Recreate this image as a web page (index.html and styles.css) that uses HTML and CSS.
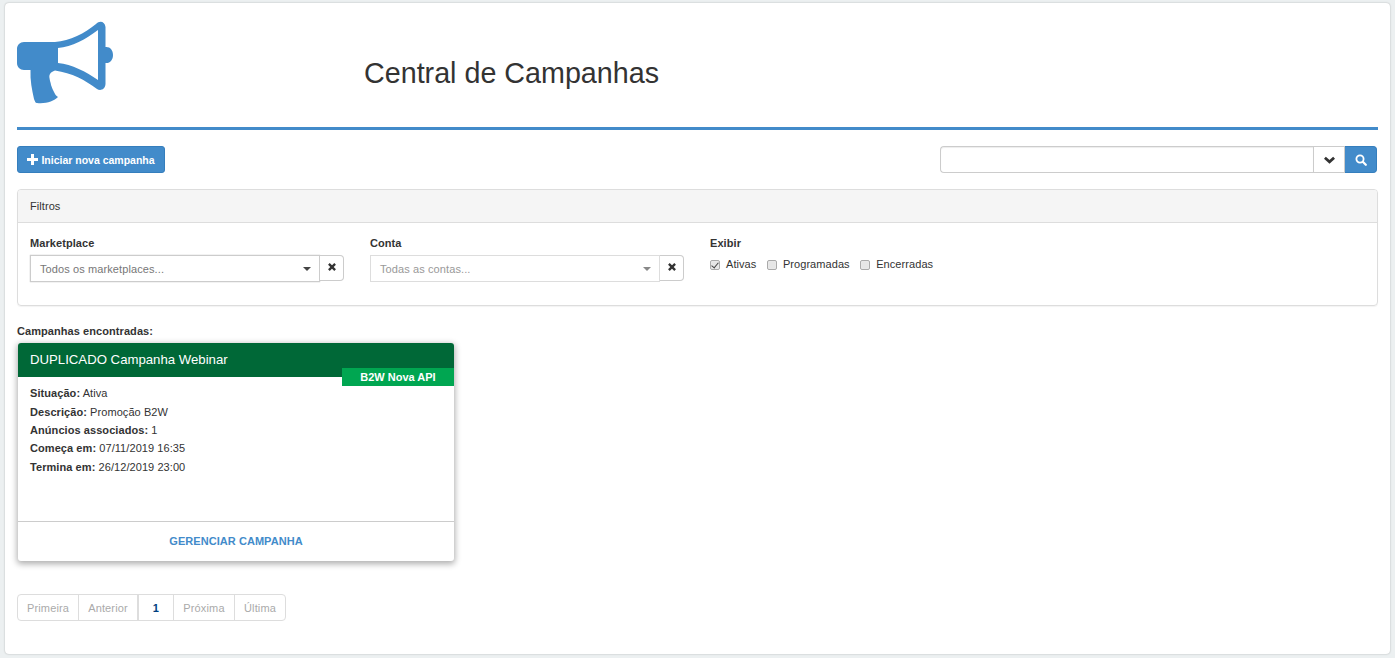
FILE: index.html
```html
<!DOCTYPE html>
<html lang="pt">
<head>
<meta charset="utf-8">
<title>Central de Campanhas</title>
<link rel="stylesheet" href="styles.css">
</head>
<body>
<main class="page">
  <header class="head">
    <svg class="logo" viewBox="17 20 96 84" aria-hidden="true">
      <path fill="#428bca" d="M24 42H55C70 41 85 33 96 24C100 20 105 22 105.5 27V47C110 46.5 113 50 113 55C113 60 110 63.5 105.5 63V84C105 90 100 91 97 89C85 80 72 73 55 70.5C50 72 49 75 49.5 78C50 82 51 83 51 85C52 88 53 90 54 92C55 94 56 96 58 97C54 101 46 104 37 103C35 103 35 101 34 99C32 90 30 80 30.5 70H24C20 70 17 67 17 63V49C17 45 20 42 24 42Z"/>
      <path fill="#fff" d="M58 48V63C72 64 86 72 98 80V30C86 39 72 47 58 48Z"/>
    </svg>
    <h1 class="title">Central de Campanhas</h1>
  </header>

  <div class="toolbar">
    <button class="btn-new" type="button">
      <svg class="plus" viewBox="0 0 11 11" aria-hidden="true"><path fill="#fff" d="M4 0H7V4H11V7H7V11H4V7H0V4H4Z"/></svg>
      Iniciar nova campanha
    </button>
    <div class="search">
      <input class="search-input" type="text" aria-label="Buscar">
      <button class="search-drop" type="button" aria-label="Opções">
        <svg viewBox="0 0 12 8" width="11" height="8" aria-hidden="true"><path fill="none" stroke="#333" stroke-width="3" d="M1 1.5L6 6L11 1.5"/></svg>
      </button>
      <button class="search-go" type="button" aria-label="Buscar">
        <svg viewBox="0 0 12 12" width="12" height="12" aria-hidden="true"><circle cx="5" cy="5" r="3.6" fill="none" stroke="#fff" stroke-width="1.8"/><path stroke="#fff" stroke-width="2.2" stroke-linecap="round" d="M8 8L10.8 10.8"/></svg>
      </button>
    </div>
  </div>

  <section class="panel">
    <div class="panel-head">Filtros</div>
    <div class="panel-body">
      <div class="field">
        <label class="field-label">Marketplace</label>
        <div class="combo">
          <div class="select select-strong"><span>Todos os marketplaces...</span><i class="caret"></i></div>
          <button class="clear" type="button" aria-label="Limpar">
            <svg viewBox="0 0 9 9" width="8" height="8" aria-hidden="true"><path stroke="#333" stroke-width="2.6" d="M1 1L8 8M8 1L1 8"/></svg>
          </button>
        </div>
      </div>
      <div class="field">
        <label class="field-label">Conta</label>
        <div class="combo">
          <div class="select select-light"><span>Todas as contas...</span><i class="caret caret-light"></i></div>
          <button class="clear" type="button" aria-label="Limpar">
            <svg viewBox="0 0 9 9" width="8" height="8" aria-hidden="true"><path stroke="#333" stroke-width="2.6" d="M1 1L8 8M8 1L1 8"/></svg>
          </button>
        </div>
      </div>
      <div class="field">
        <label class="field-label">Exibir</label>
        <div class="checks">
          <label class="check"><input type="checkbox" checked>Ativas</label>
          <label class="check"><input type="checkbox">Programadas</label>
          <label class="check"><input type="checkbox">Encerradas</label>
        </div>
      </div>
    </div>
  </section>

  <p class="found">Campanhas encontradas:</p>

  <article class="camp">
    <div class="camp-head">DUPLICADO Campanha Webinar<span class="badge">B2W Nova API</span></div>
    <div class="camp-body">
      <p class="line"><b>Situação:</b> Ativa</p>
      <p class="line"><b>Descrição:</b> Promoção B2W</p>
      <p class="line"><b>Anúncios associados:</b> 1</p>
      <p class="line"><b>Começa em:</b> 07/11/2019 16:35</p>
      <p class="line"><b>Termina em:</b> 26/12/2019 23:00</p>
    </div>
    <div class="camp-foot">GERENCIAR CAMPANHA</div>
  </article>

  <nav class="pager">
    <span class="pg pg-w1">Primeira</span>
    <span class="pg pg-w2">Anterior</span>
    <span class="pg pg-cur">1</span>
    <span class="pg pg-w3">Próxima</span>
    <span class="pg pg-w4">Última</span>
  </nav>
</main>
</body>
</html>
```
FILE: styles.css
```css
* { box-sizing: border-box; }
html, body { margin: 0; height: 100%; }
body {
  background: #ecf0f1;
  padding: 3px 5px 4px 5px;
  font-family: "Liberation Sans", Arial, sans-serif;
  font-size: 11px;
  color: #333;
  letter-spacing: .07px;
}
button, input { font-family: inherit; }
.page {
  background: #fff;
  height: 651px;
  border-radius: 4px;
  box-shadow: 0 0 2px rgba(0,0,0,.28);
  padding: 0 12px;
}
.head {
  display: flex;
  align-items: flex-start;
  height: 124px;
}
.logo { width: 96px; height: 84px; margin-top: 17px; flex: none; }
.title {
  margin: 51px 0 0 251px;
  font-size: 28.7px;
  line-height: 38px;
  font-weight: 400;
  color: #333;
  letter-spacing: 0;
}
.toolbar {
  border-top: 3px solid #428bca;
  padding-top: 16px;
  height: 62px;
  display: flex;
  justify-content: space-between;
  align-items: flex-start;
}
.btn-new {
  width: 148px;
  height: 27px;
  background: #428bca;
  border: 1px solid #357ebd;
  border-radius: 3px;
  color: #fff;
  font-size: 10.5px;
  font-weight: 700;
  letter-spacing: 0;
  padding: 0;
  display: flex;
  align-items: center;
  justify-content: center;
  gap: 3px;
}
.plus { width: 11px; height: 11px; }
.search { display: flex; width: 437px; height: 27px; margin-right: 1px; }
.search-input {
  flex: 1;
  min-width: 0;
  border: 1px solid #ccc;
  border-right: 0;
  border-radius: 4px 0 0 4px;
  background: #fff;
  box-shadow: inset 0 1px 1px rgba(0,0,0,.075);
}
.search-drop {
  width: 32px;
  border: 1px solid #ccc;
  background: #fff;
  padding: 0;
  display: flex; align-items: center; justify-content: center;
}
.search-go {
  width: 32px;
  border: 1px solid #357ebd;
  border-left: 0;
  background: #428bca;
  border-radius: 0 4px 4px 0;
  padding: 0;
  display: flex; align-items: center; justify-content: center;
}
.panel {
  height: 117px;
  border: 1px solid #ddd;
  border-radius: 4px;
  box-shadow: 0 1px 1px rgba(0,0,0,.05);
}
.panel-head {
  height: 33px;
  background: #f5f5f5;
  border-bottom: 1px solid #ddd;
  padding: 0 12px;
  line-height: 32px;
  font-size: 11px;
  border-radius: 3px 3px 0 0;
}
.panel-body { display: flex; padding: 13px 12px 0; }
.field { width: 340px; flex: none; }
.field-label {
  display: block;
  font-size: 11px;
  line-height: 15px;
  font-weight: 700;
  height: 19px;
}
.combo { display: flex; width: 314px; height: 27px; align-items: flex-start; }
.select {
  width: 290px;
  height: 27px;
  border: 1px solid #ccc;
  padding: 0 9px;
  display: flex;
  align-items: center;
  justify-content: space-between;
  color: #777;
  letter-spacing: .1px;
}
.select-strong { box-shadow: 0 0 1px rgba(0,0,0,.3); }
.select-light { border-color: #ddd; color: #999; }
.caret {
  border-top: 4px solid #444;
  border-left: 4px solid transparent;
  border-right: 4px solid transparent;
  margin-right: -1px;
}
.caret-light { border-top-color: #888; }
.clear {
  width: 24px;
  height: 26px;
  background: #fff;
  border: 1px solid #ccc;
  border-left: 0;
  border-radius: 0 4px 4px 0;
  padding: 0 0 2px;
  display: flex; align-items: center; justify-content: center;
}
.checks { display: flex; align-items: center; height: 15px; margin-top: 2px; }
.check { display: flex; align-items: center; margin-right: 10.5px; line-height: 15px; }
.check input {
  appearance: none;
  width: 10px; height: 10px;
  margin: 0 6px 0 0;
  flex: none;
  position: relative;
  border: 1px solid #aaa;
  border-radius: 2px;
  background: #e6e6e6;
  box-shadow: inset 0 0 1px #fff;
}
.check input:checked::after {
  content: "";
  position: absolute;
  left: 2px;
  top: 0;
  width: 3px;
  height: 6px;
  border: solid #444;
  border-width: 0 1.5px 1.5px 0;
  transform: rotate(40deg);
}
.found {
  margin: 0;
  padding-top: 18px;
  height: 37px;
  line-height: 15px;
  font-weight: 700;
  font-size: 11px;
}
.camp {
  margin-left: 1px;
  width: 436px;
  height: 218px;
  border-radius: 3px;
  box-shadow: 0 2px 6px 1px rgba(0,0,0,.32);
  background: #fff;
  display: flex;
  flex-direction: column;
  position: relative;
}
.camp-head {
  height: 34px;
  background: #006837;
  color: #fff;
  font-size: 13.2px;
  line-height: 33px;
  padding-left: 12px;
  border-radius: 3px 3px 0 0;
  letter-spacing: 0;
}
.badge {
  position: absolute;
  right: 0;
  top: 25px;
  width: 112px;
  height: 18px;
  background: #00a651;
  font-size: 11px;
  font-weight: 700;
  line-height: 18px;
  text-align: center;
  letter-spacing: 0;
}
.camp-body { flex: 1; padding: 7.2px 12px 0; }
.line { margin: 0; line-height: 18.4px; }
.camp-foot {
  height: 40px;
  border-top: 1px solid #ccc;
  text-align: center;
  line-height: 38px;
  color: #428bca;
  font-weight: 700;
  font-size: 11px;
  letter-spacing: .05px;
}
.pager {
  display: flex;
  margin-top: 33px;
  width: 269px;
  height: 27px;
  border: 1px solid #ddd;
  border-radius: 4px;
  color: #aaa;
  font-size: 11px;
  letter-spacing: .15px;
}
.pg {
  display: flex; align-items: center; justify-content: center;
  border-right: 1px solid #ddd;
}
.pg-w1 { width: 61px; }
.pg-w2 { width: 60px; border-right-width: 2px; }
.pg-cur { width: 35px; color: #003f7f; font-weight: 700; }
.pg-w3 { width: 61px; }
.pg-w4 { flex: 1; border-right: 0; }
```
